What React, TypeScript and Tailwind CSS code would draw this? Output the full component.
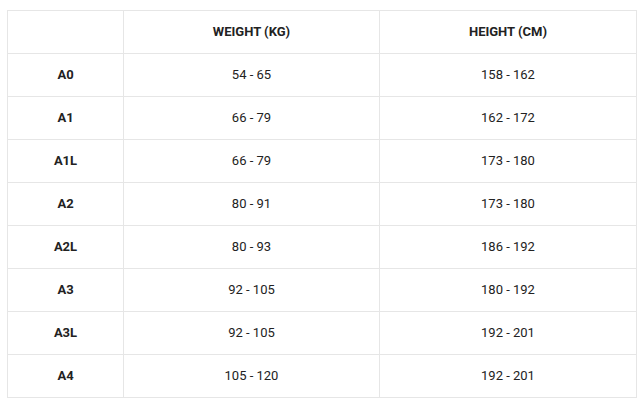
const rows = [
  ["A0", "54 - 65", "158 - 162"],
  ["A1", "66 - 79", "162 - 172"],
  ["A1L", "66 - 79", "173 - 180"],
  ["A2", "80 - 91", "173 - 180"],
  ["A2L", "80 - 93", "186 - 192"],
  ["A3", "92 - 105", "180 - 192"],
  ["A3L", "92 - 105", "192 - 201"],
  ["A4", "105 - 120", "192 - 201"],
];

export default function App() {
  return (
    <div className="min-h-screen bg-white pt-[10px] px-[7px] font-['Roboto',sans-serif] text-[13px] text-[#222]">
      <table className="w-[630px] border-collapse">
        <thead>
          <tr className="h-[43px]">
            <th className="w-[116px] border border-[#e6e6e6]"></th>
            <th className="w-[256px] border border-[#e6e6e6] font-bold">WEIGHT (KG)</th>
            <th className="border border-[#e6e6e6] font-bold">HEIGHT (CM)</th>
          </tr>
        </thead>
        <tbody>
          {rows.map(([size, weight, height]) => (
            <tr key={size} className="h-[43px]">
              <td className="border border-[#e6e6e6] text-center font-bold">{size}</td>
              <td className="border border-[#e6e6e6] text-center">{weight}</td>
              <td className="border border-[#e6e6e6] text-center">{height}</td>
            </tr>
          ))}
        </tbody>
      </table>
    </div>
  );
}
